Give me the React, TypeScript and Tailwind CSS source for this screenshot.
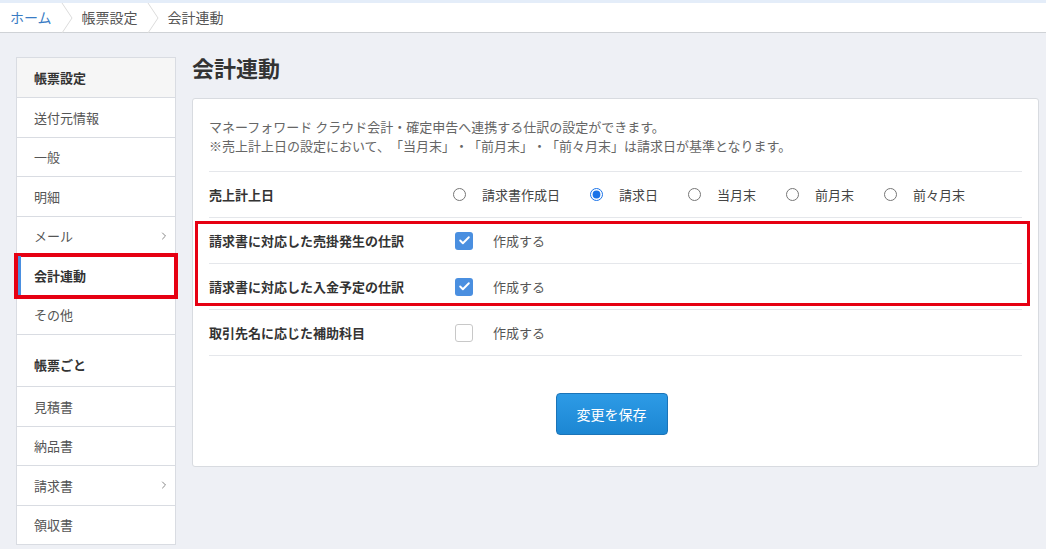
import { Check, ChevronRight } from "lucide-react";

const font = { fontFamily: '"Noto Sans CJK JP", "Noto Sans", sans-serif' };

const sideTop = [
  { name: "送付元情報" },
  { name: "一般" },
  { name: "明細" },
  { name: "メール", more: true },
  { name: "会計連動", active: true },
  { name: "その他" },
];

const sideBottom = [
  { name: "見積書" },
  { name: "納品書" },
  { name: "請求書", more: true },
  { name: "領収書" },
];

const dateOptions = ["請求書作成日", "請求日", "当月末", "前月末", "前々月末"];

type SideItem = { name: string; more?: boolean; active?: boolean };

const SideRow = ({ item }: { item: SideItem }) => (
  <div
    className={
      "relative flex items-center h-[39.5px] pl-[17px] pr-[5px] border-b border-[#d9dce2] text-[13px] " +
      (item.active
        ? "font-bold text-[#333] outline-4 outline-[#e60012] -outline-offset-1 z-10"
        : "text-[#555]")
    }
  >
    {item.active && <span className="absolute left-[1px] top-0 bottom-0 w-[3px] bg-[#4a8fe0]" />}
    <span className="flex-1">{item.name}</span>
    {item.more && <ChevronRight size={12} strokeWidth={2} className="text-[#888]" />}
  </div>
);

const Crumb = () => (
  <svg width="12" height="30" viewBox="0 0 12 30" className="mx-[9px]">
    <path d="M1 0 L11 15 L1 30" fill="none" stroke="#dcdcdc" strokeWidth="1" />
  </svg>
);

const Checkbox = ({ checked }: { checked: boolean }) =>
  checked ? (
    <span className="flex items-center justify-center w-[18px] h-[18px] rounded-[3px] bg-[#4a8fe0]">
      <Check size={13} strokeWidth={3.5} className="text-white" />
    </span>
  ) : (
    <span className="block w-[18px] h-[18px] rounded-[3px] border border-[#c8c8c8] bg-white" />
  );

const CheckRow = ({ label, checked }: { label: string; checked: boolean }) => (
  <div className="flex items-center h-[46px] border-b border-[#e5e7eb]">
    <div className="w-[246px] text-[13px] font-bold text-[#333]">{label}</div>
    <Checkbox checked={checked} />
    <span className="ml-[20px] text-[13px] text-[#555]">作成する</span>
  </div>
);

export default function App() {
  return (
    <div style={font} className="min-h-screen bg-[#eef0f5] border-t-[3px] border-[#e4edf9] [text-spacing-trim:space-all]">
      {/* breadcrumb */}
      <div className="flex items-center h-[30px] bg-white border-b border-[#cfd2d6] pl-[10px] text-[14px]">
        <span className="text-[#3a7cc4]">ホーム</span>
        <Crumb />
        <span className="text-[#555]">帳票設定</span>
        <Crumb />
        <span className="text-[#555]">会計連動</span>
      </div>

      <div className="flex pl-[16px] pr-[7px] pt-[24px] pb-[6px]">
        {/* side menu */}
        <aside className="w-[160px] shrink-0 bg-white border border-[#d9dce2] border-b-0">
          <div className="flex items-center h-[40px] pl-[17px] bg-[#f6f6f6] border-b border-[#d9dce2] text-[13px] font-bold text-[#333]">
            帳票設定
          </div>
          {sideTop.map((item) => (
            <SideRow key={item.name} item={item} />
          ))}
          <div className="flex items-end h-[52px] pl-[17px] pb-[12px] border-b border-[#d9dce2] text-[13px] font-bold text-[#333]">
            帳票ごと
          </div>
          {sideBottom.map((item) => (
            <SideRow key={item.name} item={item} />
          ))}
        </aside>

        <main className="flex-1 ml-[16px]">
          <h1 className="h-[41px] text-[22px] font-bold text-[#333] leading-[20px]">会計連動</h1>

          <div className="bg-white border border-[#d8dbe0] rounded-[3px] px-[16px] pt-[18px] pb-[31px]">
            <p className="text-[13px] leading-[19px] text-[#666] pb-[16px] border-b border-[#e5e7eb]">
              マネーフォワード クラウド会計・確定申告へ連携する仕訳の設定ができます。
              <br />
              ※売上計上日の設定において、「当月末」・「前月末」・「前々月末」は請求日が基準となります。
            </p>

            <div className="flex items-center h-[46px] border-b border-[#e5e7eb]">
              <div className="w-[244px] text-[13px] font-bold text-[#333]">売上計上日</div>
              {dateOptions.map((opt) => (
                <label key={opt} className="flex items-center mr-[30px] text-[13px] text-[#444]">
                  <input
                    type="radio"
                    name="date"
                    defaultChecked={opt === "請求日"}
                    className="m-0 w-[13px] h-[13px] accent-[#1a73e8]"
                  />
                  <span className="ml-[16px]">{opt}</span>
                </label>
              ))}
            </div>

            <div className="relative">
              <CheckRow label="請求書に対応した売掛発生の仕訳" checked />
              <CheckRow label="請求書に対応した入金予定の仕訳" checked />
              <span className="absolute left-[-14px] right-[-8px] top-[3px] bottom-[4px] border-[3px] border-[#e60012] pointer-events-none" />
            </div>
            <CheckRow label="取引先名に応じた補助科目" checked={false} />

            <div className="flex justify-center pt-[37px]">
              <button className="mr-[8px] w-[112px] h-[42px] rounded-[4px] border border-[#1b74b8] bg-gradient-to-b from-[#2d9be6] to-[#1c87d3] text-[14px] text-white">
                変更を保存
              </button>
            </div>
          </div>
        </main>
      </div>
    </div>
  );
}
